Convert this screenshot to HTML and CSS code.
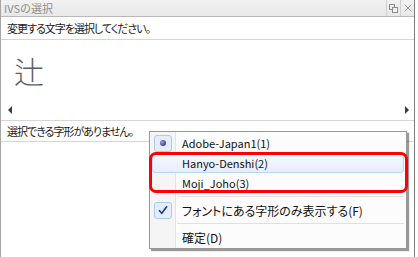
FILE: index.html
```html
<!DOCTYPE html>
<html lang="ja">
<head>
    <meta charset="UTF-8">
    <title>IVSの選択</title>
    <link rel="stylesheet" href="styles.css">
</head>
<body>
    <div class="window">
        <div class="titlebar">
            <span class="title">IVSの選択</span>
            <div class="title-buttons">
                <span class="tbtn">
                    <svg width="9" height="9" viewBox="0 0 9 9">
                        <rect x="0.5" y="0.5" width="5" height="5" fill="none" stroke="#8c8c8c"/>
                        <rect x="3.5" y="3.5" width="5" height="5" fill="#f4f4f4" stroke="#8c8c8c"/>
                    </svg>
                </span>
                <span class="tbtn">
                    <svg width="8" height="8" viewBox="0 0 8 8">
                        <path d="M0.5 0.5 L7.5 7.5 M7.5 0.5 L0.5 7.5" stroke="#9a9a9a" stroke-width="1"/>
                    </svg>
                </span>
            </div>
        </div>

        <div class="row prompt">変更する文字を選択してください。</div>

        <div class="glyph-pane">
            <div class="glyph">辻</div>
            <div class="scroller">
                <span class="arrow arrow-left"></span>
                <span class="arrow arrow-right"></span>
            </div>
        </div>

        <div class="row status">選択できる字形がありません。</div>
    </div>

    <!-- context menu over the window -->
    <div class="menu">
        <div class="menu-item">
            <span class="menu-icon checked"><span class="radio-dot"></span></span>
            <span class="menu-label latin">Adobe-Japan1(1)</span>
        </div>
        <div class="menu-item hover">
            <span class="menu-icon"></span>
            <span class="menu-label latin">Hanyo-Denshi(2)</span>
        </div>
        <div class="menu-item">
            <span class="menu-icon"></span>
            <span class="menu-label latin">Moji_Joho(3)</span>
        </div>
        <div class="menu-sep"></div>
        <div class="menu-item">
            <span class="menu-icon checked">
                <svg width="10" height="10" viewBox="0 0 10 10">
                    <path d="M1 5.2 L3.8 8.2 L9 1.2" fill="none" stroke="#24348a" stroke-width="1.6"/>
                </svg>
            </span>
            <span class="menu-label">フォントにある字形のみ表示する(F)</span>
        </div>
        <div class="menu-sep"></div>
        <div class="menu-item">
            <span class="menu-icon"></span>
            <span class="menu-label">確定(D)</span>
        </div>
    </div>
    <div class="callout"></div>
</body>
</html>
```

FILE: styles.css
```css
body {
    margin: 0;
    background-color: #ffffff;
    font-family: "Noto Sans CJK JP", sans-serif;
    color: #1a1a1a;
    width: 418px;
    height: 257px;
    overflow: hidden;
    position: relative;
}

/* Window */
.window {
    width: 413px;
    height: 257px;
    border-left: 1px solid #a5a5a5;
    border-right: 1px solid #7d7d7d;
    display: flex;
    flex-direction: column;
}

.titlebar {
    height: 16px;
    background: linear-gradient(#f2f2f2, #e8e8e8);
    border-bottom: 1px solid #b9b9b9;
    display: flex;
    justify-content: space-between;
    align-items: center;
}

.title {
    font-size: 11px;
    color: #8f8f8f;
    padding-left: 3px;
    line-height: 16px;
}

.title-buttons {
    display: flex;
    height: 16px;
}

.tbtn {
    width: 13px;
    border-left: 1px solid #d0d0d0;
    display: flex;
    align-items: center;
    justify-content: center;
}

.row {
    font-size: 11px;
    font-feature-settings: "palt";
    letter-spacing: -1px;
    padding-left: 6px;
    display: flex;
    align-items: center;
    border-bottom: 1px solid #d6d6d6;
}

.prompt {
    height: 22px;
}

.status {
    height: 20px;
}

.glyph-pane {
    height: 80px;
    border-bottom: 1px solid #d6d6d6;
    display: flex;
    flex-direction: column;
    justify-content: space-between;
}

.glyph {
    font-size: 30px;
    font-weight: 300;
    color: #5e5e5e;
    line-height: 30px;
    padding: 15px 0 0 13px;
}

.scroller {
    display: flex;
    justify-content: space-between;
    padding: 0 5px 6px 7px;
}

.arrow {
    width: 0;
    height: 0;
    border-top: 4px solid transparent;
    border-bottom: 4px solid transparent;
}

.arrow-left {
    border-right: 4px solid #3c3c3c;
}

.arrow-right {
    border-left: 4px solid #3c3c3c;
}

/* Context menu */
.menu {
    position: absolute;
    left: 149px;
    top: 131px;
    width: 256px;
    padding: 1px 0;
    background: linear-gradient(to right, #f5f5f5 0, #f5f5f5 25px, #e2e3e3 25px, #e2e3e3 26px, #ffffff 26px, #fcfcfc 27px);
    border: 1px solid #979797;
    box-shadow: 2px 2px 1px rgba(0, 0, 0, 0.4);
    font-size: 12px;
}

.menu-item {
    height: 20px;
    margin: 0 2px;
    display: flex;
    align-items: center;
    border: 1px solid transparent;
    border-radius: 3px;
    box-sizing: border-box;
}

.menu-item.hover {
    background: linear-gradient(#f4fafe, #e9ecfb);
    border-color: #b6d6f6;
}

.menu-icon {
    width: 18px;
    height: 17px;
    margin-left: 1px;
    margin-right: 10px;
    border: 1px solid transparent;
    border-radius: 3px;
    display: flex;
    align-items: center;
    justify-content: center;
    box-sizing: border-box;
}

.menu-icon.checked {
    background: #e4eefb;
    border-color: #a9cbf0;
}

.radio-dot {
    width: 6px;
    height: 6px;
    border-radius: 50%;
    background: radial-gradient(circle at 35% 35%, #9c9ee6, #3c3f9a 70%);
}

.menu-label {
    font-feature-settings: "palt";
    color: #111;
}

.menu-label.latin {
    font-size: 11px;
}

.menu-sep {
    height: 1px;
    background: #e0e0e0;
    margin: 3px 2px 3px 27px;
}

/* Red callout around two items */
.callout {
    position: absolute;
    left: 149px;
    top: 152px;
    width: 253px;
    height: 35px;
    border: 3px solid #ff0000;
    border-radius: 7px;
}
```
